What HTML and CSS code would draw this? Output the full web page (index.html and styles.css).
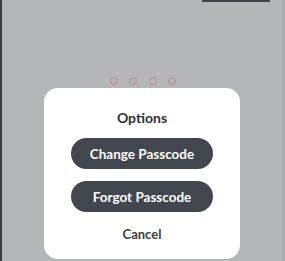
FILE: index.html
```html
<!DOCTYPE html>
<html lang="en">
<head>
    <meta charset="UTF-8">
    <title>Options</title>
    <link rel="stylesheet" href="styles.css">
</head>
<body>
    <div class="screen">
        <div class="topbar">
            <div class="topline"></div>
        </div>

        <div class="dots">
            <span class="dot"></span>
            <span class="dot"></span>
            <span class="dot"></span>
            <span class="dot"></span>
        </div>

        <div class="sheet">
            <div class="sheet-title">Options</div>
            <button class="action">Change Passcode</button>
            <button class="action">Forgot Passcode</button>
            <div class="cancel">Cancel</div>
        </div>
    </div>
</body>
</html>
```

FILE: styles.css
```css
html, body {
    margin: 0;
    padding: 0;
    height: 100%;
}
body {
    background-color: #b5b6b8;
    font-family: Lato, "Open Sans", sans-serif;
    overflow: hidden;
}
.screen {
    height: 261px;
    border-left: 2px solid #3a3b3d;
    border-right: 3px solid #adaeb0;
    box-sizing: border-box;
    display: flex;
    flex-direction: column;
    align-items: flex-start;
}
.topbar {
    width: 100%;
    display: flex;
    justify-content: flex-end;
}
.topline {
    width: 68px;
    height: 2px;
    background: #3f4249;
    margin-right: 12px;
}
.dots {
    align-self: stretch;
    display: flex;
    justify-content: center;
    gap: 11.5px;
    margin-top: 75px;
    padding-left: 2px;
}
.dot {
    width: 6px;
    height: 6px;
    border: 1.5px solid #c4828c;
    border-radius: 50%;
}
.sheet {
    margin-top: 3px;
    margin-left: 42px;
    width: 196px;
    height: 171px;
    background: #fff;
    border-radius: 14px;
    display: flex;
    flex-direction: column;
    align-items: center;
    box-sizing: border-box;
    padding-top: 21px;
}
.sheet-title {
    font-size: 14px;
    font-weight: 700;
    color: #2e3036;
    height: 17px;
    line-height: 17px;
}
.action {
    margin-top: 12px;
    width: 142px;
    height: 31px;
    border: none;
    border-radius: 16px;
    background: #41464f;
    color: #fff;
    font-family: Lato, "Open Sans", sans-serif;
    font-size: 13.5px;
    font-weight: 700;
    padding: 0;
}
.action + .action {
    margin-top: 12px;
}
.cancel {
    margin-top: 14px;
    font-size: 13px;
    font-weight: 700;
    color: #3a3c42;
}
```
